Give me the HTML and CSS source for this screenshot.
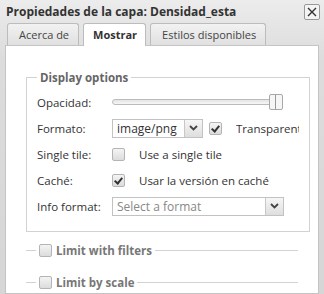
FILE: index.html
```html
<!DOCTYPE html>
<html lang="es">
<head>
    <meta charset="UTF-8">
    <title>Propiedades de la capa</title>
    <link rel="stylesheet" href="styles.css">
</head>
<body>
    <div class="window">
        <div class="header">
            <span class="title">Propiedades de la capa: Densidad_esta</span>
            <span class="close">
                <svg width="10" height="10" viewBox="0 0 10 10"><path d="M1 1L9 9M9 1L1 9" stroke="#333" stroke-width="1.4"/></svg>
            </span>
        </div>
        <div class="tabs">
            <span class="tab">Acerca de</span>
            <span class="tab active">Mostrar</span>
            <span class="tab">Estilos disponibles</span>
        </div>
        <div class="panel">
            <fieldset class="group">
                <legend>Display options</legend>
                <div class="row">
                    <span class="label">Opacidad:</span>
                    <div class="slider">
                        <div class="track"></div>
                        <div class="thumb"></div>
                    </div>
                </div>
                <div class="row">
                    <span class="label">Formato:</span>
                    <div class="combo small">
                        <span class="value">image/png</span>
                        <span class="trigger"><svg width="9" height="6" viewBox="0 0 9 6"><path d="M1 1L4.5 4.5L8 1" fill="none" stroke="#444" stroke-width="1.8"/></svg></span>
                    </div>
                    <span class="check checked"></span>
                    <span class="opt-text clip">Transparente</span>
                </div>
                <div class="row">
                    <span class="label">Single tile:</span>
                    <span class="check"></span>
                    <span class="opt-text">Use a single tile</span>
                </div>
                <div class="row">
                    <span class="label">Caché:</span>
                    <span class="check checked"></span>
                    <span class="opt-text">Usar la versión en caché</span>
                </div>
                <div class="row">
                    <span class="label">Info format:</span>
                    <div class="combo wide">
                        <span class="value empty">Select a format</span>
                        <span class="trigger"><svg width="9" height="6" viewBox="0 0 9 6"><path d="M1 1L4.5 4.5L8 1" fill="none" stroke="#444" stroke-width="1.8"/></svg></span>
                    </div>
                </div>
            </fieldset>
            <fieldset class="group collapsed">
                <legend><span class="check"></span>Limit with filters</legend>
            </fieldset>
            <fieldset class="group collapsed">
                <legend><span class="check"></span>Limit by scale</legend>
            </fieldset>
        </div>
    </div>
</body>
</html>
```

FILE: styles.css
```css
body {
    margin: 0;
    padding: 0;
    font-family: 'Open Sans', 'Liberation Sans', sans-serif;
    font-size: 11.5px;
    color: #333;
    background: #fff;
}

.window {
    width: 324px;
    height: 294px;
    overflow: hidden;
    display: flex;
    flex-direction: column;
    background: linear-gradient(#ececec, #dcdcdc 60px, #d6d6d6);
    box-sizing: border-box;
    padding: 0 5px 0 5px;
}

.header {
    height: 23px;
    display: flex;
    align-items: center;
    justify-content: space-between;
}

.title {
    font-weight: bold;
    font-size: 12px;
    color: #333;
    padding-left: 1px;
}

.close {
    width: 14px;
    height: 14px;
    border: 1px solid #999;
    border-radius: 2px;
    background: #f4f4f4;
    display: flex;
    align-items: center;
    justify-content: center;
    margin-right: -1px;
}

.tabs {
    height: 22px;
    display: flex;
    gap: 4px;
    padding-left: 2px;
    border-bottom: 1px solid #c4c4c4;
}

.tab {
    border: 1px solid #bcbcbc;
    border-bottom: none;
    border-radius: 3px 3px 0 0;
    background: linear-gradient(#f2f2f2, #e0e0e0);
    padding: 0 9px 0 11px;
    font-size: 11px;
    line-height: 21px;
    color: #444;
}

.tab.active {
    background: #fff;
    font-weight: bold;
    color: #333;
    height: 22px;
    margin-bottom: -1px;
    padding: 0 8px 0 9px;
}

.panel {
    flex: 1;
    background: #fff;
    border: 1px solid #c4c4c4;
    border-top: none;
    padding: 24px 20px 0 20px;
}

.group {
    margin: 0;
    padding: 0 10px 12px 10px;
    border: 1px solid #d2d2d2;
}

.group legend {
    padding: 0 3px;
    font-weight: bold;
    color: #666;
    line-height: 15px;
}

.group.collapsed {
    border-width: 1px 0 0 0;
    padding: 0 10px;
    margin-top: 11px;
}

.group.collapsed + .group.collapsed {
    margin-top: 17px;
}

.group.collapsed legend {
    display: flex;
    align-items: center;
    color: #777;
}

.group.collapsed legend .check {
    margin-right: 4px;
}

.row {
    height: 26px;
    display: flex;
    align-items: center;
}

.row:first-of-type {
    margin-top: 4px;
}

.label {
    width: 75px;
    flex-shrink: 0;
}

.slider {
    position: relative;
    width: 171px;
    height: 16px;
    display: flex;
    align-items: center;
}

.track {
    width: 100%;
    height: 4px;
    border: 1px solid #bbb;
    border-radius: 3px;
    background: linear-gradient(#e4e4e4, #f6f6f6);
}

.thumb {
    position: absolute;
    right: 0;
    top: 0;
    width: 12px;
    height: 14px;
    border: 1px solid #a8a8a8;
    border-radius: 2px;
    background: linear-gradient(90deg, #f6f6f6 5px, #999 5px, #999 6px, #f6f6f6 6px);
}

.combo {
    display: flex;
    height: 19px;
    border: 1px solid #c2c2c2;
    box-sizing: border-box;
    background: #fff;
}

.combo.small {
    width: 91px;
    margin-right: 6px;
}

.combo.wide {
    width: 172px;
}

.value {
    flex: 1;
    padding-left: 4px;
    font-size: 12px;
    line-height: 17px;
    color: #333;
}

.value.empty {
    color: #888;
}

.trigger {
    width: 17px;
    border-left: 1px solid #c8c8c8;
    background: linear-gradient(#f6f6f6, #dedede);
    display: flex;
    align-items: center;
    justify-content: center;
}

.check {
    width: 11px;
    height: 11px;
    border: 1px solid #b4b4b4;
    border-radius: 2px;
    background: linear-gradient(#f4f4f4, #dcdcdc);
    flex-shrink: 0;
    position: relative;
}

.check.checked::after {
    content: "";
    position: absolute;
    left: 3px;
    top: 1px;
    width: 3px;
    height: 6px;
    border: solid #333;
    border-width: 0 2px 2px 0;
    transform: rotate(40deg);
}

.opt-text {
    margin-left: 14px;
    white-space: nowrap;
}

.opt-text.clip {
    overflow: hidden;
    width: 63px;
}
```
